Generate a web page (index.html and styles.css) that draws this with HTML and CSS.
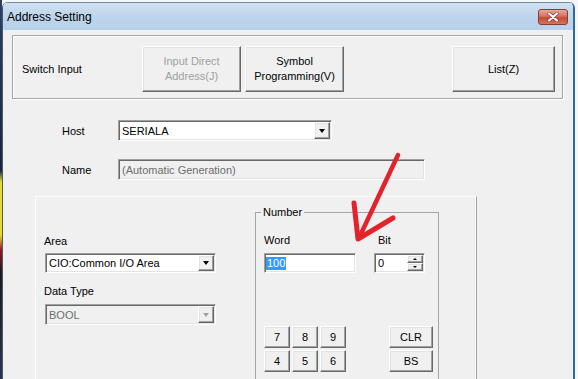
FILE: index.html
```html
<!DOCTYPE html>
<html lang="en">
<head>
    <meta charset="UTF-8">
    <meta name="viewport" content="width=device-width, initial-scale=1.0">
    <title>Address Setting</title>
    <link rel="stylesheet" href="styles.css">
</head>
<body>
    <div class="desktop-edge"></div>

    <div class="window">
        <div class="titlebar">
            <span class="title">Address Setting</span>
            <span class="close-btn">
                <svg width="12" height="10" viewBox="0 0 12 10">
                    <path d="M2 1.5 L10 8.5 M10 1.5 L2 8.5" stroke="#7a3a2e" stroke-width="3.4" stroke-linecap="round"/>
                    <path d="M2 1.5 L10 8.5 M10 1.5 L2 8.5" stroke="#fff" stroke-width="2.2" stroke-linecap="round"/>
                </svg>
            </span>
        </div>

        <div class="client">
            <div class="switch-box">
                <span class="switch-label">Switch Input</span>
                <button class="btn raised btn-direct" disabled>Input Direct<br>Address(J)</button>
                <button class="btn raised btn-symbol">Symbol<br>Programming(V)</button>
                <button class="btn raised btn-list">List(Z)</button>
            </div>

            <div class="field-row row-host">
                <span class="row-label">Host</span>
                <div class="combo sunken combo-host">
                    <span class="combo-text">SERIALA</span>
                    <span class="drop-btn raised"><i class="tri"></i></span>
                </div>
            </div>

            <div class="field-row row-name">
                <span class="row-label">Name</span>
                <div class="field sunken disabled field-name">(Automatic Generation)</div>
            </div>

            <div class="panel">
                <div class="area-col">
                    <div class="col-label">Area</div>
                    <div class="combo sunken combo-area">
                        <span class="combo-text">CIO:Common I/O Area</span>
                        <span class="drop-btn raised"><i class="tri"></i></span>
                    </div>
                    <div class="col-label type-label">Data Type</div>
                    <div class="combo sunken disabled combo-type">
                        <span class="combo-text">BOOL</span>
                        <span class="drop-btn raised"><i class="tri"></i></span>
                    </div>
                </div>

                <fieldset class="number-box">
                    <legend>Number</legend>
                    <div class="word-grid">
                        <span class="col-label">Word</span>
                        <span class="col-label bit-label">Bit</span>
                        <div class="field sunken word-field"><span class="sel">100</span></div>
                        <div class="spin sunken">
                            <span class="spin-text">0</span>
                            <span class="spin-btns">
                                <span class="spin-btn raised"><i class="tri-up"></i></span>
                                <span class="spin-btn raised"><i class="tri-down"></i></span>
                            </span>
                        </div>
                    </div>

                    <div class="keypad">
                        <div class="digits">
                            <button class="btn raised key">7</button>
                            <button class="btn raised key">8</button>
                            <button class="btn raised key">9</button>
                            <button class="btn raised key">4</button>
                            <button class="btn raised key">5</button>
                            <button class="btn raised key">6</button>
                        </div>
                        <div class="edit-keys">
                            <button class="btn raised key">CLR</button>
                            <button class="btn raised key">BS</button>
                        </div>
                    </div>
                </fieldset>
            </div>
        </div>
    </div>

    <!-- red marker drawn on top of the screenshot -->
    <svg class="marker" width="578" height="379" viewBox="0 0 578 379">
        <path d="M398 155 L359 238" stroke="#e4222b" stroke-width="4.5" stroke-linecap="round" fill="none"/>
        <path d="M354 203 L358 239 L393 218" stroke="#e4222b" stroke-width="5" stroke-linecap="round" stroke-linejoin="round" fill="none"/>
    </svg>
</body>
</html>
```

FILE: styles.css
```css
body {
    margin: 0;
    width: 578px;
    height: 379px;
    overflow: hidden;
    position: relative;
    display: flex;
    align-items: flex-start;
    background: #f4f6f8;
    font-family: "Liberation Sans", Arial, sans-serif;
    font-size: 11px;
    color: #000;
}
.desktop-edge {
    width: 2px;
    height: 379px;
    background: linear-gradient(#2b4168 0, #17253a 45%, #e6d93c 48%, #e6d93c 62%, #8c1c1c 66%, #1b1b1b 72%, #263650 100%);
}
.window {
    width: 573px;
    height: 377px;
    margin-top: 2px;
    box-sizing: border-box;
    border-left: 1px solid #4d5966;
    border-right: 2px solid #2c6c99;
    border-radius: 6px 6px 0 0;
    background: #f0f0f0;
    overflow: hidden;
}
.titlebar {
    height: 28px;
    box-sizing: border-box;
    border-top: 1px solid #71879e;
    background: linear-gradient(#cfe0f2, #bcd3eb 60%, #b8d0e9);
    display: flex;
    align-items: center;
    justify-content: space-between;
    padding: 0 5px 0 4px;
}
.title {
    font-size: 12px;
    color: #000;
}
.close-btn {
    width: 30px;
    height: 16px;
    box-sizing: border-box;
    border: 1px solid #8a3c30;
    border-radius: 3px;
    background: linear-gradient(#e8a898, #d4735f 45%, #c44a33 55%, #d7735d);
    display: flex;
    align-items: center;
    justify-content: center;
}

.client {
    padding: 5px 10px 0 9px;
}

/* 3D control looks */
.raised {
    box-sizing: border-box;
    border: 1px solid;
    border-color: #fff #696969 #696969 #fff;
    box-shadow: inset -1px -1px #a0a0a0, inset 1px 1px #e3e3e3;
    background: #f0f0f0;
}
.sunken {
    box-sizing: border-box;
    border: 1px solid;
    border-color: #a0a0a0 #fff #fff #a0a0a0;
    box-shadow: inset 1px 1px #696969, inset -1px -1px #e3e3e3;
    background: #fff;
}
.btn {
    font-family: "Liberation Sans", Arial, sans-serif;
    font-size: 11px;
    color: #000;
    padding: 0;
    line-height: 15px;
}
.btn:disabled {
    color: #a0a0a0;
}

.switch-box {
    height: 64px;
    box-sizing: border-box;
    border: 1px solid #a5a5a5;
    box-shadow: inset 1px 1px #fff, 1px 1px #fff;
    padding: 10px 0 0 9px;
    display: flex;
    align-items: flex-start;
}
.switch-label {
    width: 120px;
    line-height: 46px;
}
.btn-direct, .btn-symbol {
    width: 99px;
    height: 46px;
}
.btn-symbol {
    margin-left: 4px;
}
.btn-list {
    width: 103px;
    height: 46px;
    margin-left: 108px;
}

.field-row {
    display: flex;
    align-items: center;
    padding-left: 50px;
}
.row-host {
    margin-top: 21px;
}
.row-name {
    margin-top: 18px;
}
.row-label {
    width: 56px;
}

.combo {
    display: flex;
    align-items: stretch;
    padding: 1px;
}
.combo-text {
    flex: 1;
    padding-left: 2px;
    display: flex;
    align-items: center;
}
.drop-btn {
    width: 16px;
    display: flex;
    align-items: center;
    justify-content: center;
}
.tri {
    width: 0;
    height: 0;
    border-left: 3px solid transparent;
    border-right: 3px solid transparent;
    border-top: 4px solid #000;
}
.combo-host {
    width: 214px;
    height: 21px;
}
.field {
    height: 21px;
    padding-left: 3px;
    display: flex;
    align-items: center;
}
.disabled {
    background: #f0f0f0;
    color: #6d6d6d;
}
.disabled .tri {
    border-top-color: #a0a0a0;
}
.field-name {
    width: 307px;
}

.panel {
    width: 442px;
    height: 200px;
    margin: 16px 0 0 23px;
    box-sizing: border-box;
    border-top: 1px solid #fcfcfc;
    border-left: 1px solid #fcfcfc;
    border-right: 1px solid #a0a0a0;
    box-shadow: inset -1px 0 #fff;
    display: flex;
    align-items: flex-start;
    padding-left: 8px;
}
.area-col {
    width: 173px;
    padding-top: 38px;
}
.col-label {
    line-height: 13px;
}
.combo-area, .combo-type {
    width: 171px;
    margin-left: 1px;
}
.combo-area {
    height: 20px;
    margin-top: 5px;
}
.type-label {
    margin-top: 12px;
}
.combo-type {
    height: 21px;
    margin-top: 6px;
}

.number-box {
    width: 184px;
    height: 200px;
    margin: 9px 0 0 38px;
    box-sizing: border-box;
    min-width: 0;
    border: 1px solid #a5a5a5;
    padding: 15px 8px 0 8px;
}
.number-box legend {
    padding: 0 2px;
    margin-left: -3px;
    line-height: 13px;
}
.word-grid {
    display: grid;
    grid-template-columns: 92px 51px;
    column-gap: 18px;
    row-gap: 6px;
}
.bit-label {
    padding-left: 4px;
}
.word-field {
    height: 20px;
    padding-left: 1px;
}
.sel {
    background: #3399ff;
    color: #fff;
    line-height: 13px;
    padding: 0 1px;
}
.spin {
    height: 20px;
    display: flex;
    padding: 1px;
}
.spin-text {
    flex: 1;
    padding-left: 2px;
    display: flex;
    align-items: center;
}
.spin-btns {
    width: 16px;
    display: flex;
    flex-direction: column;
}
.spin-btn {
    flex: 1;
    display: flex;
    align-items: center;
    justify-content: center;
}
.tri-up, .tri-down {
    width: 0;
    height: 0;
    border-left: 2px solid transparent;
    border-right: 2px solid transparent;
}
.tri-up {
    border-bottom: 2px solid #000;
}
.tri-down {
    border-top: 2px solid #000;
}

.keypad {
    display: flex;
    margin-top: 53px;
}
.digits {
    display: grid;
    grid-template-columns: repeat(3, 26px);
    grid-auto-rows: 22px;
    gap: 2px;
}
.edit-keys {
    display: grid;
    grid-template-columns: 44px;
    grid-auto-rows: 22px;
    row-gap: 2px;
    margin-left: 43px;
}
.key {
    font-size: 11px;
}

.marker {
    position: absolute;
    left: 0;
    top: 0;
    pointer-events: none;
}
```
